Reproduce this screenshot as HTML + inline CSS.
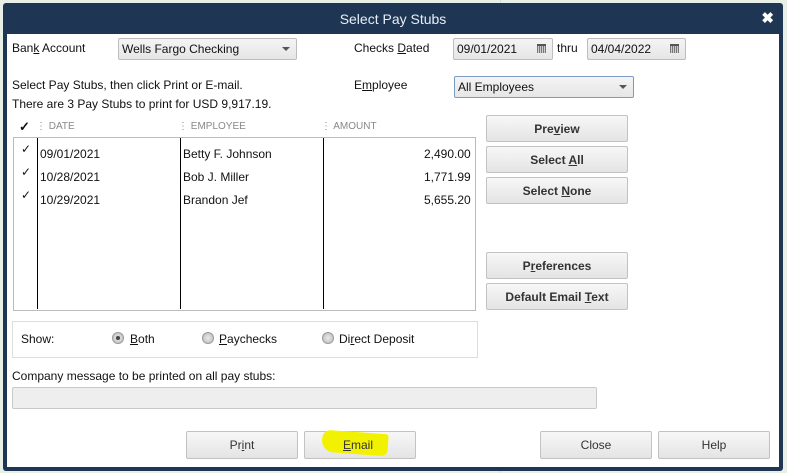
<!DOCTYPE html>
<html><head><style>
*{box-sizing:border-box;margin:0;padding:0}
body{width:787px;height:473px;background:#e8efe6;position:relative;overflow:hidden;font-family:"Liberation Sans",sans-serif;font-size:12px;color:#111}
.a{position:absolute;white-space:nowrap}
#dlg{position:absolute;left:3px;top:3px;width:780px;height:468px;background:#1e3554;border-radius:3px}
#body{position:absolute;left:4px;top:31px;width:772px;height:433px;background:#fff}
.title{left:0;width:780px;top:8px;text-align:center;color:#e8eef5;font-size:14px}
.box{position:absolute;background:linear-gradient(#f4f4f4,#e6e6e6);border:1px solid #bdbdbd;border-radius:2px}
.btn{position:absolute;background:linear-gradient(#f7f7f7,#e4e4e4);border:1px solid #c2c2c2;border-radius:2px;text-align:center;color:#333;font-weight:bold;font-size:12px}
.dd{position:absolute;width:0;height:0;border-left:4px solid transparent;border-right:4px solid transparent;border-top:4px solid #555}
.cal{position:absolute;width:9px;height:9px;background:repeating-linear-gradient(90deg,#777 0 1px,#ccc 1px 2px);border-top:2px solid #555}
.vl{position:absolute;width:1px;background:#000;top:138px;height:171px}
.rad{position:absolute;width:12px;height:12px;border-radius:50%;background:radial-gradient(#e8e8e8,#bbb);border:1px solid #999}
u{text-decoration:underline}
.hd{color:#888;font-size:10px}
</style></head><body>
<div class="a" style="left:500px;top:0;width:1px;height:473px;background:#cdd"></div>
<div id="dlg">
<div class="a title">Select Pay Stubs</div>
<div class="a" style="right:9px;top:6px;color:#fff;font-size:15px;font-weight:bold">✖</div>
</div>
<div id="body" style="left:7px;top:34px"></div>

<div class="a" style="left:12px;top:41px">Ban<u>k</u> Account</div>
<div class="box" style="left:118px;top:38px;width:179px;height:22px"></div>
<div class="a" style="left:122px;top:42px">Wells Fargo Checking</div>
<div class="dd" style="left:282px;top:47px"></div>

<div class="a" style="left:354px;top:41px">Checks <u>D</u>ated</div>
<div class="box" style="left:453px;top:38px;width:100px;height:22px"></div>
<div class="a" style="left:457px;top:42px">09/01/2021</div>
<div class="cal" style="left:537px;top:44px"></div>
<div class="a" style="left:557px;top:41px">thru</div>
<div class="box" style="left:587px;top:38px;width:99px;height:22px"></div>
<div class="a" style="left:591px;top:42px">04/04/2022</div>
<div class="cal" style="left:670px;top:44px"></div>

<div class="a" style="left:12px;top:78px">Select Pay Stubs, then click Print or E-mail.</div>
<div class="a" style="left:12px;top:97px">There are 3 Pay Stubs to print for USD 9,917.19.</div>
<div class="a" style="left:354px;top:78px">E<u>m</u>ployee</div>
<div class="box" style="left:454px;top:76px;width:180px;height:22px;border-color:#7a9cc4"></div>
<div class="a" style="left:458px;top:80px">All Employees</div>
<div class="dd" style="left:619px;top:85px"></div>

<div class="a" style="left:19px;top:119px;font-size:13px;font-weight:bold">✓</div>
<div class="a hd" style="left:36px;top:121px">⋮ DATE</div>
<div class="a hd" style="left:178px;top:121px">⋮ EMPLOYEE</div>
<div class="a hd" style="left:321px;top:121px">⋮ AMOUNT</div>
<div class="a" style="left:13px;top:137px;width:463px;height:174px;border:1px solid #bbb"></div>
<div class="vl" style="left:37px"></div><div class="vl" style="left:180px"></div><div class="vl" style="left:323px"></div>
<div class="a" style="left:21px;top:142px">✓</div><div class="a" style="left:40px;top:147px">09/01/2021</div><div class="a" style="left:183px;top:147px">Betty F. Johnson</div><div class="a" style="left:424px;top:147px">2,490.00</div>
<div class="a" style="left:21px;top:165px">✓</div><div class="a" style="left:40px;top:170px">10/28/2021</div><div class="a" style="left:183px;top:170px">Bob J. Miller</div><div class="a" style="left:424px;top:170px">1,771.99</div>
<div class="a" style="left:21px;top:188px">✓</div><div class="a" style="left:40px;top:193px">10/29/2021</div><div class="a" style="left:183px;top:193px">Brandon Jef</div><div class="a" style="left:424px;top:193px">5,655.20</div>

<div class="btn" style="left:486px;top:115px;width:142px;height:27px;line-height:26px">Pre<u>v</u>iew</div>
<div class="btn" style="left:486px;top:146px;width:142px;height:27px;line-height:26px">Select <u>A</u>ll</div>
<div class="btn" style="left:486px;top:177px;width:142px;height:27px;line-height:26px">Select <u>N</u>one</div>
<div class="btn" style="left:486px;top:252px;width:142px;height:27px;line-height:26px">P<u>r</u>eferences</div>
<div class="btn" style="left:486px;top:283px;width:142px;height:27px;line-height:26px">Default Email <u>T</u>ext</div>

<div class="a" style="left:12px;top:321px;width:466px;height:37px;border:1px solid #ddd"></div>
<div class="a" style="left:21px;top:332px">Show:</div>
<div class="rad" style="left:112px;top:332px"></div><div class="a" style="left:116px;top:336px;width:4px;height:4px;border-radius:50%;background:#444"></div>
<div class="a" style="left:130px;top:332px"><u>B</u>oth</div>
<div class="rad" style="left:202px;top:332px"></div><div class="a" style="left:219px;top:332px"><u>P</u>aychecks</div>
<div class="rad" style="left:322px;top:332px"></div><div class="a" style="left:339px;top:332px">Di<u>r</u>ect Deposit</div>

<div class="a" style="left:12px;top:369px">Company message to be printed on all pay stubs:</div>
<div class="a" style="left:12px;top:387px;width:585px;height:22px;background:#eee;border:1px solid #c8c8c8;border-radius:2px"></div>

<div class="btn" style="left:186px;top:431px;width:112px;height:28px;line-height:27px;font-weight:normal">Pr<u>i</u>nt</div>
<div class="btn" style="left:304px;top:431px;width:112px;height:28px;line-height:27px;font-weight:normal"></div>
<div class="a" style="left:322px;top:432px;width:66px;height:22px;background:#f2f200;border-radius:8px 3px 6px 12px;transform:rotate(4deg)"></div>
<div class="a" style="left:343px;top:438px;color:#333"><u>E</u>mail</div>
<div class="btn" style="left:540px;top:431px;width:112px;height:28px;line-height:27px;font-weight:normal">Close</div>
<div class="btn" style="left:658px;top:431px;width:112px;height:28px;line-height:27px;font-weight:normal">Help</div>
</body></html>
